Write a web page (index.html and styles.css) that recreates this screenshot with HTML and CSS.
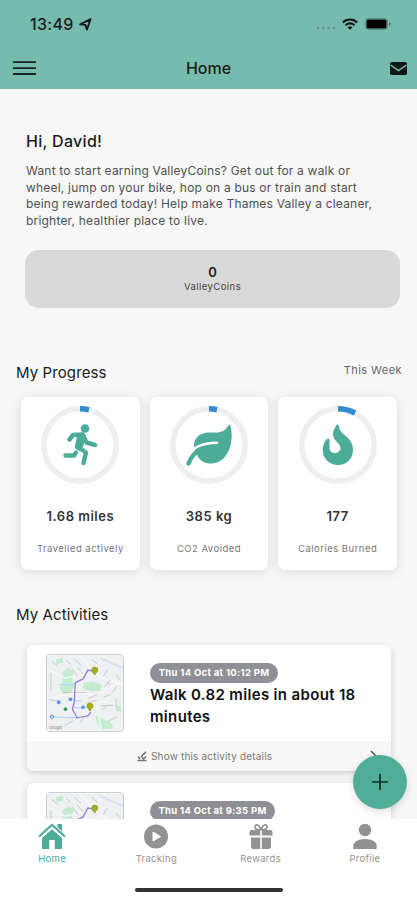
FILE: index.html
```html
<!DOCTYPE html>
<html lang="en">
<head>
    <meta charset="UTF-8">
    <meta name="viewport" content="width=device-width, initial-scale=1.0">
    <title>Home</title>
    <link rel="stylesheet" href="styles.css">
</head>
<body>
    <svg class="defs" aria-hidden="true">
        <symbol id="map" viewBox="0 0 78 77">
            <rect width="78" height="77" fill="#eef0f1"/>
            <g fill="#c3ebce">
                <path d="M16 17l6-4 5 3-1 8 2 8-5 8-7-1-3-6 3-6z"/>
                <path d="M38 28l8-1 10 3-1 6-10 1-9-4z"/>
                <path d="M50 61l9 5 7 3 2 6-12 1-5-7z"/>
                <path d="M9 4l7-2 1 5-7 2zM70 51l6-2v9l-5-1z"/>
            </g>
            <path d="M0 14l18 9 25-4 17-19M0 45l24-6 28 1 26-14M33 0l22 23 23 7M5 77l20-23 33-7 20 5M56 77l-5-25" fill="none" stroke="#f6f7f7" stroke-width="1.5"/>
            <path d="M55 3l23 10" stroke="#d6e3ed" stroke-width="2"/>
            <path d="M12 30h16M2 45l10 2M27 46l9 1M7 63l24 1M27 53l10 1" stroke="#b4d4f6" stroke-width="1.2"/>
            <g fill="none" stroke="#c6c7c9" stroke-width="1">
                <path d="M20 5l4 4M28 4l7 6M26 14l6 8M31 12l6 7M46 4l6 5M49 15l-3 4M62 15l-4 6M71 20l5 6M65 25l-6 7M61 27l4 3M72 31l-5 7M58 43l7-3M42 44l10-4M40 49l11-3M55 52l13-1M61 51l-4 5M62 68l10-5M18 72l9-5M34 69l3-4M4 18v18M17 38h24M71 44v8M11 11l-6-5"/>
            </g>
            <path d="M48 16l-6-1-5 9-8 4-1 20-2 7 5 9 11-2 3-4" fill="none" stroke="#9580e2" stroke-width="1.4"/>
            <g fill="#5d9beb">
                <circle cx="12" cy="48" r="2"/>
                <circle cx="24" cy="45" r="2"/>
                <circle cx="37" cy="53" r="2"/>
                <circle cx="5" cy="63" r="2.2"/>
            </g>
            <circle cx="5" cy="63" r="1" fill="#fff"/>
            <circle cx="19" cy="55" r="2" fill="#3a9b5f"/>
            <path d="M49 20c-1-3-3-3-3-5a3 3 0 0 1 6 0c0 2-2 2-3 5zM44 57c-1-3-3-3-3-5a3 3 0 0 1 6 0c0 2-2 2-3 5z" fill="#a2b11c" stroke="#8c9d14"/>
            <text x="2" y="75" class="map-credit">Google</text>
        </symbol>
    </svg>

    <div class="screen">
        <header class="header">
            <div class="status">
                <span class="time">13:49</span>
                <svg class="location" width="13" height="13" viewBox="0 0 14 14"><path d="M1.2 6.8L12.5 1.2 8.5 12.6 6.9 7.4z" fill="none" stroke="#111b19" stroke-width="2" stroke-linejoin="round"/></svg>
                <svg class="signal" width="20" height="4" viewBox="0 0 20 4" fill="#5b9487"><circle cx="2" cy="2" r="1.2"/><circle cx="7.3" cy="2" r="1.2"/><circle cx="12.6" cy="2" r="1.2"/><circle cx="17.9" cy="2" r="1.2"/></svg>
                <svg class="wifi" width="16" height="12" viewBox="0 0 16 12" fill="none" stroke="#0c1513" stroke-width="2.1"><path d="M.9 4.4a10.2 10.2 0 0 1 14.2 0M3.6 7.2a6.3 6.3 0 0 1 8.8 0"/><path d="M8 11.8L5.6 9.4a3.5 3.5 0 0 1 4.8 0z" fill="#0c1513" stroke="none"/></svg>
                <svg class="battery" width="26" height="12" viewBox="0 0 26 12"><rect x=".5" y=".5" width="22" height="11" rx="3" fill="none" stroke="#558e82"/><rect x="1.5" y="1.5" width="20" height="9" rx="1.5"/><path d="M24 4v4q1.6-.5 1.6-2T24 4z" fill="#3f6d63"/></svg>
            </div>
            <nav class="navbar">
                <svg width="23" height="15" viewBox="0 0 23 15" stroke="#142522" stroke-width="1.8"><path d="M0 1.2h23M0 7.2h23M0 13h23"/></svg>
                <h1>Home</h1>
                <svg width="17" height="13" viewBox="0 0 17 13"><rect width="17" height="13" rx="1.8" fill="#0d1715"/><path d="M.5 3l8 5.500 8-5.500" fill="none" stroke="#76bbae" stroke-width="1.5"/></svg>
            </nav>
        </header>

        <main class="content">
            <section class="welcome">
                <h2>Hi, David!</h2>
                <p>Want to start earning ValleyCoins? Get out for a walk or<br>wheel, jump on your bike, hop on a bus or train and start<br>being rewarded today! Help make Thames Valley a cleaner,<br>brighter, healthier place to live.</p>
                <div class="coins">
                    <strong>0</strong>
                    <span>ValleyCoins</span>
                </div>
            </section>

            <div class="section-title">
                <h2>My Progress</h2>
                <span>This Week</span>
            </div>
            <section class="progress">
                <div class="stat">
                    <svg class="ring" width="78" height="78" viewBox="0 0 78 78">
                        <circle class="track" cx="39" cy="39" r="36.2"/>
                        <path class="bar" d="M39 2.8a36.2 36.2 0 0 1 9 1.1"/>
                        <g fill="none" stroke="#4cac98" stroke-width="4.5" stroke-linecap="round" stroke-linejoin="round">
                            <path d="M28.500 33.500l3.500-4.500 9.500-.5 4 8 8.500 2.500"/>
                            <path d="M24.500 49.500h8.500l2-3"/>
                            <path d="M38.500 30L36 40.500l9 6L42.500 57"/>
                            <path d="M41.500 31L38 41" stroke-width="7"/>
                        </g>
                        <circle cx="44" cy="22.500" r="4.300" fill="#4cac98"/>
                    </svg>
                    <strong>1.68 miles</strong>
                    <span>Travelled actively</span>
                </div>
                <div class="stat">
                    <svg class="ring" width="78" height="78" viewBox="0 0 78 78">
                        <circle class="track" cx="39" cy="39" r="36.2"/>
                        <path class="bar" d="M39 2.8a36.2 36.2 0 0 1 8 .9"/>
                        <path d="M24 42C23 33 29 26.500 39 26.500h7c6 0 9-2 12.500-7 1-1 1.500-1 2 .5C65 39 56 57 42 57.500c-7 .3-12-2.500-14-7z" fill="#4cac98"/>
                        <path d="M18 50q6.500-13 29-13.300" fill="none" stroke="#fff" stroke-width="2.400" stroke-linecap="round"/>
                        <path d="M18.500 57.500c3-7.500 7-12 13-14.500" fill="none" stroke="#4cac98" stroke-width="4.500" stroke-linecap="round"/>
                    </svg>
                    <strong>385 kg</strong>
                    <span>CO2 Avoided</span>
                </div>
                <div class="stat">
                    <svg class="ring" width="78" height="78" viewBox="0 0 78 78">
                        <circle class="track" cx="39" cy="39" r="36.2"/>
                        <path class="bar" d="M39 2.8a36.2 36.2 0 0 1 17 4.2"/>
                        <path d="M37.500 19.200c.8-1.200 2-.8 2.300.6.8 6.500 4.800 8 9.500 12.500 2.800 3 4.700 6.700 4.700 11.200C54 53 47.500 59 39 59s-15.300-6.500-15.300-15c0-4.500 1.500-8 4-10.700 1-1.100 2.800-.6 2.800.8V42c0 3 2.500 5 5.300 5 3.200 0 5.700-2.200 5.700-5 0-5.500-7.500-6.500-7.500-14 0-3.500 1.800-6 3.500-8.800z" fill="#4cac98"/>
                    </svg>
                    <strong>177</strong>
                    <span>Calories Burned</span>
                </div>
            </section>

            <div class="section-title">
                <h2>My Activities</h2>
            </div>
            <section class="activities">
                <article class="activity">
                    <div class="summary">
                        <svg class="map"><use href="#map"/></svg>
                        <div class="info">
                            <span class="date">Thu 14 Oct at 10:12 PM</span>
                            <h3>Walk 0.82 miles in about 18<br>minutes</h3>
                        </div>
                    </div>
                    <div class="details">
                        <svg width="10" height="11" viewBox="0 0 10 11" fill="none" stroke="#777" stroke-width="1.6"><path d="M9 .8L4.500 5.500l2 2.500L9 5.500M1 5.500l2 2.500M.5 9.500h9"/></svg>
                        <span>Show this activity details</span>
                        <svg class="chevron" width="7" height="12" viewBox="0 0 7 12" fill="none" stroke="#555" stroke-width="1.5"><path d="M1 1l5 5-5 5"/></svg>
                    </div>
                </article>
                <article class="activity">
                    <div class="summary">
                        <svg class="map"><use href="#map"/></svg>
                        <div class="info">
                            <span class="date early">Thu 14 Oct at 9:35 PM</span>
                        </div>
                    </div>
                </article>
            </section>
        </main>

        <footer class="footer">
            <nav class="tabs">
                <a class="tab active">
                    <svg width="28" height="27" viewBox="0 0 28 27" fill="#4cac98"><path d="M19.500 1H24v9l-4.500-4zM4 15L14 6.200 24 15v11h-7.200v-9h-5.600v9H4z"/><path d="M1 13.500L14 2l13 11.500" fill="none" stroke="#fff" stroke-width="4"/><path d="M1 13.500L14 2l13 11.500" fill="none" stroke="#4cac98" stroke-width="2.200"/></svg>
                    <span>Home</span>
                </a>
                <a class="tab">
                    <svg width="28" height="27" viewBox="0 0 28 27"><circle cx="14" cy="13.500" r="12" fill="#929292"/><path d="M11 9v9l7.500-4.500z" fill="#fff" stroke="#fff" stroke-linejoin="round"/></svg>
                    <span>Tracking</span>
                </a>
                <a class="tab">
                    <svg width="28" height="27" viewBox="0 0 28 27" fill="#929292"><path d="M2.500 9q0-2 2-2h8.700v5.500H2.500zM14.800 7h8.700q2 0 2 2v3.500H14.800zM4 14.500h9.200V26H6.500Q4 26 4 23.500zM14.800 14.500H24v9q0 2.500-2.500 2.500h-6.700z"/><path d="M13.500 7C9 7 7.800 5.500 8 3.500c.3-2.300 4.700-3 5.500 3.500M14.500 7C19 7 20.200 5.500 20 3.500c-.3-2.300-4.700-3-5.500 3.500" fill="none" stroke="#929292" stroke-width="1.7"/></svg>
                    <span>Rewards</span>
                </a>
                <a class="tab">
                    <svg width="28" height="27" viewBox="0 0 28 27" fill="#929292"><circle cx="14" cy="7" r="6.200"/><path d="M2.300 26v-3c0-4 4.500-7 11.700-7s11.700 3 11.700 7v3z"/></svg>
                    <span>Profile</span>
                </a>
            </nav>
            <div class="home-indicator"></div>
        </footer>

        <button class="add" aria-label="Add">
            <svg width="18" height="18" viewBox="0 0 18 18" stroke="#122c26" stroke-width="1.700"><path d="M1 9h16M9 1v16"/></svg>
        </button>
    </div>
</body>
</html>
```
FILE: styles.css
```css
* {
    box-sizing: border-box;
}
body {
    margin: 0;
    font-family: Inter, "Liberation Sans", sans-serif;
    color: #1b1b1b;
    background: #f7f7f7;
}
h1, h2, h3, p {
    margin: 0;
    font-weight: 400;
}
svg {
    display: block;
    flex-shrink: 0;
}
.defs {
    display: none;
}
.screen {
    position: relative;
    display: flex;
    flex-direction: column;
    height: 900px;
    max-width: 417px;
    overflow: hidden;
}
.header {
    height: 89px;
    flex-shrink: 0;
    background: #76bbae;
    border-bottom: 1px solid #76b5a7;
}
.status {
    display: flex;
    align-items: center;
    height: 48px;
    padding: 0 26px 0 30px;
}
.time {
    font-size: 16px;
    font-weight: 500;
    width: 49px;
    letter-spacing: 0.3px;
}
.signal {
    margin: 8px 6px 0 auto;
}
.battery {
    margin-left: 7px;
}
.wifi {
    margin-top: -1px;
}
.navbar {
    display: grid;
    grid-template-columns: 23px 1fr 17px;
    align-items: center;
    height: 40px;
    padding: 0 10px 0 13px;
}
.navbar h1 {
    font-size: 16px;
    font-weight: 500;
    text-align: center;
    padding-right: 9px;
}
.content {
    height: 730px;
    flex-shrink: 0;
    overflow: hidden;
    background: #f7f7f7;
}
.welcome {
    padding: 42px 17px 0 25px;
}
.welcome h2 {
    padding-left: 1px;
    font-size: 16px;
    line-height: 20px;
    font-weight: 500;
    letter-spacing: 0.3px;
}
.welcome p {
    padding-left: 1px;
    margin: 12px 0 21px;
    font-size: 12px;
    line-height: 16.6px;
    letter-spacing: 0.2px;
    color: #505050;
    white-space: nowrap;
}
.coins {
    display: flex;
    flex-direction: column;
    align-items: center;
    height: 58px;
    padding-top: 15px;
    border-radius: 14px;
    background: #d9d9d9;
    line-height: 14px;
}
.coins strong {
    font-size: 13px;
    font-weight: 600;
}
.coins span {
    font-size: 9.5px;
    line-height: 16px;
    letter-spacing: 0.45px;
    color: #444;
}
.section-title {
    display: flex;
    justify-content: space-between;
    height: 20px;
    margin-top: 55px;
    padding: 0 15px 0 16px;
}
.section-title h2 {
    font-size: 15px;
    line-height: 20px;
    letter-spacing: 0.1px;
}
.section-title span {
    font-size: 11px;
    line-height: 15px;
    letter-spacing: 0.45px;
    color: #666;
}
.progress {
    display: grid;
    grid-template-columns: repeat(3, 1fr);
    gap: 10px;
    margin-top: 14px;
    padding: 0 20px 0 21px;
}
.stat {
    display: flex;
    flex-direction: column;
    align-items: center;
    height: 173px;
    padding-top: 9px;
    border-radius: 7px;
    background: #fff;
    box-shadow: 0 2px 12px rgba(0, 0, 0, 0.12);
}
.track {
    fill: none;
    stroke: #eee;
    stroke-width: 5.6;
}
.bar {
    fill: none;
    stroke: #348bd1;
    stroke-width: 5.6;
}
.stat strong {
    margin-top: 22px;
    font-size: 13px;
    line-height: 20px;
    font-weight: 600;
    letter-spacing: 0.5px;
    color: #333;
}
.stat span {
    margin-top: 15px;
    font-size: 9.5px;
    line-height: 16px;
    letter-spacing: 0.48px;
    color: #777;
}
.progress + .section-title {
    margin-top: 35px;
}
.activities {
    display: flex;
    flex-direction: column;
    gap: 12px;
    margin-top: 20px;
    padding: 0 26px 0 27px;
}
.activity {
    height: 126px;
    border-radius: 6px;
    background: #fff;
    box-shadow: 0 2px 7px rgba(0, 0, 0, 0.17);
}
.summary {
    display: flex;
    gap: 26px;
    height: 96px;
    padding: 9px 0 0 19px;
}
.map {
    width: 78px;
    height: 78px;
    border: 1px solid #c9cccd;
    border-radius: 4px;
}
.map-credit {
    font-size: 4px;
    fill: #777;
}
.info {
    padding-top: 9px;
}
.date {
    display: block;
    width: 128px;
    height: 20px;
    border-radius: 10px;
    background: #8f9095;
    color: #fff;
    font-size: 9.5px;
    font-weight: 700;
    line-height: 20px;
    letter-spacing: 0.3px;
    text-align: center;
    white-space: nowrap;
}
.early {
    width: 125px;
}
.info h3 {
    margin-top: 1px;
    font-size: 15px;
    line-height: 21.5px;
    font-weight: 600;
    letter-spacing: 0.34px;
    color: #111;
    white-space: nowrap;
}
.details {
    display: flex;
    align-items: center;
    gap: 4px;
    height: 30px;
    padding: 0 14px 0 110px;
    border-radius: 0 0 6px 6px;
    background: #f7f7f7;
    font-size: 10px;
    letter-spacing: 0.17px;
    color: #777;
}
.chevron {
    margin-left: auto;
}
.footer {
    height: 81px;
    flex-shrink: 0;
    background: #fff;
}
.tabs {
    display: grid;
    grid-template-columns: repeat(4, 1fr);
    height: 69px;
    padding-top: 4px;
}
.tab {
    display: flex;
    flex-direction: column;
    align-items: center;
    color: #929292;
    font-size: 9.5px;
    line-height: 16px;
    letter-spacing: 0.3px;
}
.tab span {
    margin-top: 1px;
}
.active {
    color: #4cac98;
}
.home-indicator {
    width: 148px;
    height: 4px;
    margin: 0 auto;
    border-radius: 2px;
    background: #333;
}
.add {
    position: absolute;
    right: 10px;
    bottom: 91px;
    display: flex;
    align-items: center;
    justify-content: center;
    width: 54px;
    height: 54px;
    padding: 0;
    border: 0;
    border-radius: 50%;
    background: #50ad98;
    box-shadow: 0 3px 9px rgba(0, 0, 0, 0.13);
}
```
